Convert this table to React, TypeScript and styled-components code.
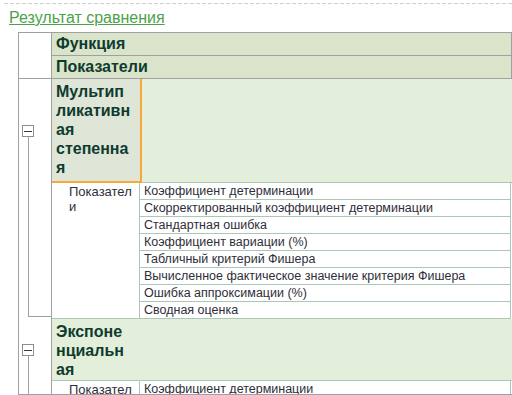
import React from 'react';
import styled, { createGlobalStyle } from 'styled-components';

const GlobalStyle = createGlobalStyle`
  *, *::before, *::after { box-sizing: border-box; }
  html, body { margin: 0; padding: 0; background: #fff; }
  body { font-family: "Liberation Sans", Arial, sans-serif; overflow: hidden; }
`;

/* colours */
const GRID = '#a0a0a0';
const LIGHT = '#abc7b7';
const HEAD_BG = '#d9e4cb';
const ROW_BG = '#e3eedb';
const SEL_BG = '#dfe6d8';
const ORANGE = '#f7a839';
const DARK = '#0e3b2e';
const TEXT = '#2e2e3a';

const Page = styled.div`
  width: 512px;
  height: 395px;
  overflow: hidden;
`;

const TopRule = styled.div`
  height: 1px;
  margin: 3px 0 0 4px;
  background: repeating-linear-gradient(to right, #cfcfcf 0 4px, transparent 4px 6px);
`;

const Title = styled.a`
  display: block;
  width: fit-content;
  margin: 5px 0 0 9px;
  font-size: 16px;
  line-height: 18px;
  color: #4ca24a;
  text-decoration: underline;
  cursor: pointer;
`;

const Frame = styled.div`
  margin: 5px 0 0 18px;
  height: 363px;
  border: 1px solid ${GRID};
  border-right: none;
  overflow: hidden;
`;

/* header */
const Head = styled.div`
  display: grid;
  grid-template-columns: 33px 1fr;
  grid-template-rows: 23px 23px;
`;

const HeadCorner = styled.div`
  grid-row: 1 / 3;
  border-right: 1px solid ${GRID};
  border-bottom: 1px solid ${GRID};
`;

const HeadCell = styled.div`
  background: ${HEAD_BG};
  border-right: 1px solid ${GRID};
  border-bottom: 1px solid ${GRID};
  padding: 0 4px;
  font-size: 16px;
  font-weight: bold;
  line-height: 22px;
  color: ${DARK};
`;

/* group */
const Group = styled.div`
  display: grid;
  grid-template-columns: 33px 87px 1fr;
  grid-template-rows: auto repeat(8, 17px);
`;

const TreeHead = styled.div`
  grid-column: 1;
  grid-row: 1;
  display: flex;
  flex-direction: column;
  align-items: flex-start;
  padding-left: 3px;
  border-right: 1px solid ${GRID};
`;

const Spacer = styled.div`
  flex: 1;
`;

const Toggle = styled.div`
  width: 12px;
  height: 12px;
  border: 1px solid #8e8e8e;
  background: #fff;
  display: flex;
  align-items: center;
  justify-content: center;

  &::after {
    content: '';
    width: 8px;
    height: 1px;
    background: #3a3a3a;
  }
`;

const Stem = styled.div`
  flex: 1;
  margin-left: 6px;
  border-left: 1px solid ${GRID};
`;

const TreeTail = styled.div`
  grid-column: 1;
  grid-row: 2 / -1;
  display: flex;
  padding: 0 0 2px 9px;
  border-right: 1px solid ${GRID};
`;

const Elbow = styled.div`
  flex: 1;
  border-left: 1px solid ${GRID};
  border-bottom: 1px solid ${GRID};
`;

const NameCell = styled.div<{ $selected?: boolean }>`
  grid-column: 2;
  grid-row: 1;
  z-index: 1;
  background: ${(p) => (p.$selected ? SEL_BG : ROW_BG)};
  padding: 3px 0 ${(p) => (p.$selected ? '4px' : '1px')} 4px;
  margin-right: ${(p) => (p.$selected ? '-3px' : '0')};
  border-right: ${(p) => (p.$selected ? `2px solid ${ORANGE}` : 'none')};
  border-bottom: ${(p) => (p.$selected ? `2px solid ${ORANGE}` : `1px solid ${LIGHT}`)};
  font-size: 16px;
  font-weight: bold;
  line-height: 19px;
  color: ${DARK};
  white-space: pre;
  overflow: hidden;
`;

const RowFill = styled.div`
  grid-column: 3;
  grid-row: 1;
  background: ${ROW_BG};
  border-bottom: 1px solid ${LIGHT};
`;

const SubLabel = styled.div`
  grid-column: 2;
  grid-row: 2 / -1;
  padding: 1px 4px 0 17px;
  border-bottom: 1px solid ${LIGHT};
  font-size: 13px;
  line-height: 15px;
  color: ${TEXT};
  word-break: break-all;
`;

const ValueCell = styled.div`
  grid-column: 3;
  margin-right: 1px;
  padding: 0 4px;
  border-left: 1px solid ${LIGHT};
  border-right: 1px solid ${LIGHT};
  border-bottom: 1px solid ${LIGHT};
  font-size: 12.5px;
  line-height: 16px;
  color: ${TEXT};
  white-space: nowrap;
  overflow: hidden;
`;

const metrics = [
  'Коэффициент детерминации',
  'Скорректированный коэффициент детерминации',
  'Стандартная ошибка',
  'Коэффициент вариации (%)',
  'Табличный критерий Фишера',
  'Вычисленное фактическое значение критерия Фишера',
  'Ошибка аппроксимации (%)',
  'Сводная оценка',
];

const groups = [
  { lines: ['Мультип', 'ликативн', 'ая', 'степенна', 'я'], selected: true },
  { lines: ['Экспоне', 'нциальн', 'ая'], selected: false },
];

export default function App() {
  return (
    <Page>
      <GlobalStyle />
      <TopRule />
      <Title>Результат сравнения</Title>
      <Frame>
        <Head>
          <HeadCorner />
          <HeadCell>Функция</HeadCell>
          <HeadCell>Показатели</HeadCell>
        </Head>

        {groups.map((g) => (
          <Group key={g.lines[0]}>
            <TreeHead>
              <Spacer />
              <Toggle />
              <Stem />
            </TreeHead>
            <NameCell $selected={g.selected}>{g.lines.join('\n')}</NameCell>
            <RowFill />
            <TreeTail>
              <Elbow />
            </TreeTail>
            <SubLabel>Показатели</SubLabel>
            {metrics.map((m) => (
              <ValueCell key={m}>{m}</ValueCell>
            ))}
          </Group>
        ))}
      </Frame>
    </Page>
  );
}
